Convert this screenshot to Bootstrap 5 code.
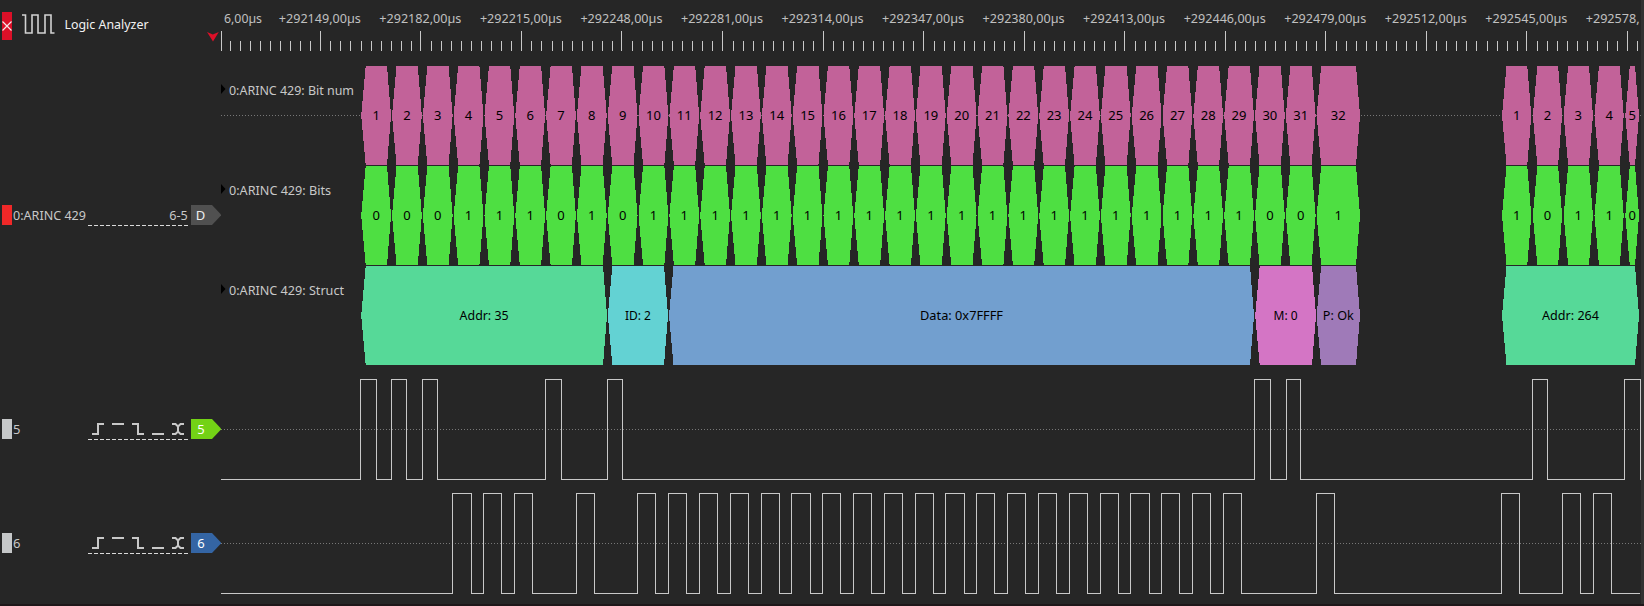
<!DOCTYPE html>
<html lang="en">
<head>
<meta charset="utf-8">
<title>Logic Analyzer</title>
<link href="https://cdn.jsdelivr.net/npm/bootstrap@5.3.0/dist/css/bootstrap.min.css" rel="stylesheet">
<style>
body{background:#262626;color:#c8c8c8;font:13px/20px "Noto Sans",sans-serif;width:1644px;height:606px}
.side{width:221px}
.plot{width:1423px}
.ruler-row{height:56px}
.decoder-row{height:311px}
.ch5-row{height:125px}
.ch6-row{height:114px}
.close-btn{width:10px;height:28px;background:#dc1028;margin:12px 0 0 2px}
.app-name{margin:15px 0 0 7px}
.wave-icon{margin:14px 0 0 10px}
.grip{width:10px;height:20px;margin-left:2px}
.bg-on{background:#f02828}
.bg-off{background:#c5c7c8}
.ch-name{width:76px;padding-left:1px}
.ch-label{height:20px}
.label-decoder{margin-top:149px}
.label-ch5{margin-top:52px}
.label-ch6{margin-top:41px}
svg{display:block}
svg text{font-family:"Noto Sans",sans-serif;font-size:13px}
.edge-strip{background:#323232;width:3px;height:606px;right:0;top:0}
.base-line{background:#1e1719;height:2px;bottom:0;left:0;width:1644px}
</style>
</head>
<body class="overflow-hidden position-relative">
<main class="d-flex flex-column">
  <header class="ruler-row d-flex">
    <div class="side d-flex align-items-start">
      <div class="close-btn"><svg width="10" height="28"><path d="M.5 9.500l9 9M9.500 9.500l-9 9" stroke="#f5e8ea" stroke-width="1.200"/></svg></div>
      <svg class="wave-icon" width="34" height="22" fill="none" stroke="#d2d2d2" stroke-width="1.600"><path d="M0 1H3.500V19H10V1H16V19H23V1H29V19H32.500"/></svg>
      <svg class="app-name" width="90" height="20"><text x="1.500" y="14" fill="#f2f2f2" textLength="84" lengthAdjust="spacingAndGlyphs">Logic Analyzer</text></svg>
    </div>
    <svg class="plot overflow-visible" id="ruler" height="56" viewBox="221 0 1423 56"></svg>
  </header>
  <section class="decoder-row d-flex">
    <div class="side d-flex align-items-start ch-label label-decoder">
      <div class="grip bg-on"></div>
      <svg width="76" height="20"><text x="1" y="15" fill="#c8c8c8" textLength="73" lengthAdjust="spacingAndGlyphs">0:ARINC 429</text></svg>
      <svg width="133" height="24"><text x="81.300" y="15" fill="#c8c8c8" textLength="18.500" lengthAdjust="spacingAndGlyphs">6-5</text><path d="M0 20.500H100" stroke="#dadada" stroke-dasharray="4 2"/><path d="M103 0h21l9.500 10-9.500 10h-21z" fill="#505050"/><text x="112.500" y="15" text-anchor="middle" fill="#eee">D</text></svg>
    </div>
    <svg class="plot" id="decoder" height="311" viewBox="221 56 1423 311"></svg>
  </section>
  <section class="ch5-row d-flex">
    <div class="side d-flex align-items-start ch-label label-ch5">
      <div class="grip bg-off"></div><div class="ch-name">5</div>
      <svg width="133" height="24" class="trig" data-color="#73d216" data-label="5"></svg>
    </div>
    <svg class="plot" id="ch5" height="125" viewBox="221 367 1423 125"></svg>
  </section>
  <section class="ch6-row d-flex">
    <div class="side d-flex align-items-start ch-label label-ch6">
      <div class="grip bg-off"></div><div class="ch-name">6</div>
      <svg width="133" height="24" class="trig" data-color="#3465a4" data-label="6"></svg>
    </div>
    <svg class="plot" id="ch6" height="114" viewBox="221 492 1423 114"></svg>
  </section>
</main>
<div class="edge-strip position-absolute"></div>
<div class="base-line position-absolute"></div>
<script>
// trigger selectors and channel flags
document.querySelectorAll('.trig').forEach(s => {
  s.innerHTML = `<path d="M4 15H10V5H16M24 5H36M44 5H50V15H56M64 15H76M84 5H87.500L90 7.500V12.500L87.500 15H84M96 5H92.500L90 7.500M90 12.500L92.500 15H96" fill="none" stroke="#c8c8c8" stroke-width="2"/>
  <path d="M0 20.500H100" stroke="#dadada" stroke-dasharray="4 2"/><path d="M103 0h21l9.500 10-9.500 10h-21z" fill="${s.dataset.color}"/><text x="113" y="15" text-anchor="middle" fill="#fff">${s.dataset.label}</text>`;
});
// time ruler
let r = '<path d="M207 32L212.800 34.500 218.800 32 213 41.500z" fill="#dc1028"/>', ticks = 'M221.500 31V51';
for (let i = 1; i < 10; i++) ticks += `M${Math.floor(220.4 + i * 10.05)}.500 41V51`;
for (let k = 0; k < 14; k++) {
  const x = 320.3 + k * 100.54;
  ticks += `M${Math.floor(x)}.500 31V51`;
  for (let i = 1; i < 10; i++) if (x + i * 10.05 < 1640) ticks += `M${Math.floor(x + i * 10.05 + .5)}.500 41V51`;
  if (k < 13) r += `<text x="${x - 41.5}" y="23" fill="#c0c0c0" textLength="82" lengthAdjust="spacingAndGlyphs">+${292149 + 33 * k},00µs</text>`;
}
r += '<text x="224" y="23" fill="#c0c0c0" textLength="38" lengthAdjust="spacingAndGlyphs">6,00µs</text>';
r += '<text x="1585.700" y="23" fill="#c0c0c0" textLength="54" lengthAdjust="spacingAndGlyphs">+292578,</text>';
document.getElementById('ruler').innerHTML = r + `<path d="${ticks}" stroke="#c8c8c8" shape-rendering="crispEdges"/>`;
// decoded rows
const dots = (y, a, b) => `<path d="M${a} ${y}H${b}" stroke="#777" stroke-dasharray="1 2" shape-rendering="crispEdges"/>`;
const block = (a, b, y, c, t, w) => `<path d="M${a} ${y + 49.5}L${a + 4.5} ${y}H${b - 4}L${b} ${y + 49.5}L${b - 4} ${y + 99}H${a + 4.5}z" fill="${c}" shape-rendering="crispEdges"/><text x="${(a + b) / 2}" y="${y + 54}" text-anchor="middle" fill="#000"${w ? ` textLength="${w}" lengthAdjust="spacingAndGlyphs"` : ''}>${t}</text>`;
let d = dots(115.5, 221, 1641);
const bits = '00011101011111111111111111111001';
for (let i = 0; i < 32; i++) {
  const a = 361.2 + 30.82 * i, b = i == 31 ? 1360 : a + 29.8;
  d += block(a, b, 66, '#c26299', i + 1) + block(a, b, 166, '#4edf42', bits[i]);
}
for (let i = 0; i < 5; i++) {
  const a = 1502 + 30.82 * i, b = i == 4 ? 1639 : a + 29.3;
  d += block(a, b, 66, '#c26299', i + 1) + block(a, b, 166, '#4edf42', '10110'[i]);
}
[[361.2,607,'#56d998','Addr: 35',49],[607.8,668,'#63d2d3','ID: 2',26],[669,1254,'#729fcf','Data: 0x7FFFF',83],[1255.2,1316,'#d475c5','M: 0',24],[1316.6,1360,'#9f7ab8','P: Ok',31],[1502,1639,'#56d998','Addr: 264',57]]
  .forEach(s => d += block(s[0], s[1], 266, s[2], s[3], s[4]));
[['Bit num',125],['Bits',102],['Struct',115]].forEach(([t, w], i) => {
  const y = 84 + i * 100;
  d += `<path d="M221 ${y}L225.500 ${y + 5}L221 ${y + 10}z" fill="#000"/><text x="229" y="${y + 11}" fill="#c8c8c8" textLength="${w}" lengthAdjust="spacingAndGlyphs">0:ARINC 429: ${t}</text>`;
});
document.getElementById('decoder').innerHTML = d;
// signal traces
function trace(id, hi, edges) {
  let p = `M221 ${hi + 100}`;
  edges.forEach(([a, b]) => p += `H${a}V${hi}H${b}V${hi + 100}`);
  if (id == 'ch6') p += 'H1640';
  document.getElementById(id).innerHTML = dots(hi + 50, 221, 1641) + `<path d="${p}" fill="none" stroke="#c8c8c8" shape-rendering="crispEdges"/>`;
}
trace('ch5', 379.5, [[360.5,376.5],[391.5,406.5],[422.5,437.5],[545.5,561.5],[607.5,622.5],[1254.5,1270.5],[1286.5,1300.5],[1532.5,1547.5],[1624.5,1640.5]]);
const e6 = [];
[...bits].forEach((v, i) => {
  if (v == '1' && i < 31) { const a = 360.4 + 30.818 * i; e6.push([Math.floor(a) + .5, Math.floor(a + 18.2) + .5]); }
});
trace('ch6', 493.5, [...e6, [1316.5,1334.5],[1501.5,1519.5],[1562.5,1580.5],[1593.5,1611.5]]);
</script>
<script src="https://cdn.jsdelivr.net/npm/bootstrap@5.3.0/dist/js/bootstrap.bundle.min.js"></script>
</body>
</html>
